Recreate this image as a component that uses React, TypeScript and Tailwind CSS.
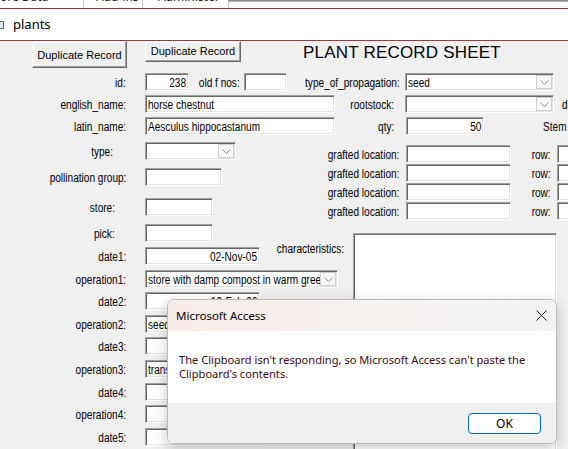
import React from 'react';

const SANS = "font-['Liberation_Sans',Arial,sans-serif]";
const UI = "font-['Noto_Sans','Open_Sans',sans-serif]";
const SUNKEN =
  'bg-white border border-t-[#a0a0a0] border-l-[#a0a0a0] border-b-white border-r-white shadow-[inset_1px_1px_0_#696969,inset_-1px_-1px_0_#e3e3e3]';
const RAISED =
  'bg-[#f0f0f0] border border-t-white border-l-white border-b-[#696969] border-r-[#696969] shadow-[inset_-1px_-1px_0_#a0a0a0,inset_1px_1px_0_#f8f8f8]';

// Access form text is Arial Narrow; squeeze Liberation Sans to the same width
const Narrow: React.FC<{ right?: boolean; children: React.ReactNode }> = ({ right, children }) => (
  <span
    className={`inline-block whitespace-nowrap text-[12px] leading-none text-black scale-x-[0.84] ${
      right ? 'origin-right' : 'origin-left'
    }`}
  >
    {children}
  </span>
);

const Chevron = () => (
  <svg width="9" height="5" viewBox="0 0 9 5">
    <polyline points="0.5,0.5 4.5,4.5 8.5,0.5" fill="none" stroke="#8c8c8c" strokeWidth="1" />
  </svg>
);

interface FieldProps {
  w: string;
  value?: string;
  right?: boolean;
  combo?: boolean;
  className?: string;
}

const Field: React.FC<FieldProps> = ({ w, value, right, combo, className = '' }) => (
  <div className={`${SUNKEN} ${w} h-[18px] shrink-0 flex items-center overflow-hidden ${className}`}>
    <div className={`flex-1 min-w-0 overflow-hidden whitespace-nowrap px-[2px] ${right ? 'text-right' : ''}`}>
      {value && <Narrow right={right}>{value}</Narrow>}
    </div>
    {combo && (
      <div className="w-[16px] h-[14px] mr-[1px] shrink-0 border border-[#cfcfcf] bg-[#fbfbfb] flex items-center justify-center">
        <Chevron />
      </div>
    )}
  </div>
);

const Label: React.FC<{ w: string; className?: string; children: React.ReactNode }> = ({
  w,
  className = '',
  children,
}) => (
  <div className={`${w} shrink-0 text-right whitespace-nowrap ${className}`}>
    <Narrow right>{children}</Narrow>
  </div>
);

// left column rows: label cell is 126px, field starts at x 145
const LEFT_ROWS = [
  { label: 'type:', pr: 'pr-[13px]', mt: 'mt-0', field: <Field w="w-[91px]" combo /> },
  { label: 'pollination group:', pr: '', mt: 'mt-[8px]', field: <Field w="w-[77px]" /> },
  { label: 'store:', pr: 'pr-[11px]', mt: 'mt-[12px]', field: <Field w="w-[68px]" /> },
  { label: 'pick:', pr: 'pr-[11px]', mt: 'mt-[8px]', field: <Field w="w-[68px]" /> },
  { label: 'date1:', pr: '', mt: 'mt-[5px]', field: <Field w="w-[115px]" value="02-Nov-05" right /> },
  {
    label: 'operation1:',
    pr: '',
    mt: 'mt-[5px]',
    field: <Field w="w-[193px]" value="store with damp compost in warm greenhouse" combo />,
  },
  { label: 'date2:', pr: '', mt: 'mt-[4px]', field: <Field w="w-[115px]" value="19-Feb-06" right /> },
  { label: 'operation2:', pr: '', mt: 'mt-[5px]', field: <Field w="w-[193px]" value="seed sown in pots" combo /> },
  { label: 'date3:', pr: '', mt: 'mt-[4px]', field: <Field w="w-[115px]" /> },
  { label: 'operation3:', pr: '', mt: 'mt-[5px]', field: <Field w="w-[193px]" value="transplanted" combo /> },
  { label: 'date4:', pr: '', mt: 'mt-[5px]', field: <Field w="w-[115px]" /> },
  { label: 'operation4:', pr: '', mt: 'mt-[4px]', field: <Field w="w-[193px]" combo /> },
  { label: 'date5:', pr: '', mt: 'mt-[5px]', field: <Field w="w-[115px]" /> },
];

const GRAFTED = ['mt-0', 'mt-[1px]', 'mt-[1px]', 'mt-[1px]'];

export default function App() {
  return (
    <div className={`relative w-[568px] h-[449px] overflow-hidden bg-[#f0f0f0] ${SANS}`}>
      {/* ribbon remnant */}
      <div className="relative h-[9px] bg-white flex overflow-hidden border-b border-[#a4373a]">
        <div className="absolute left-[228px] right-0 top-0 h-[2px] bg-gradient-to-b from-[#7a7a7a] to-[#c8c8c8]" />
        <div className={`w-[83px] -mt-[12px] text-[12px] text-[#222] ${UI}`}>ore Data</div>
        <div className="w-px h-[8px] bg-[#c8c8c8]" />
        <div className={`w-[58px] -mt-[12px] pl-[12px] text-[12px] text-[#222] ${UI}`}>Add-ins</div>
        <div className="w-px h-[8px] bg-[#c8c8c8]" />
        <div className={`w-[85px] -mt-[12px] pl-[15px] text-[12px] text-[#222] ${UI}`}>Administer</div>
        <div className="w-px h-[8px] bg-[#c8c8c8]" />
      </div>

      {/* object tab */}
      <div className="h-[32px] bg-white border-b border-[#a4373a] flex items-center">
        <div className="w-[4px] h-[8px] border border-l-0 border-[#4a6a9a] bg-[#dfe8f5] mt-[1px]" />
        <span className={`ml-[9px] text-[13px] text-black ${UI}`}>plants</span>
      </div>

      {/* form header */}
      <div className="flex items-start h-[27px]">
        <button className={`${RAISED} ml-[32px] w-[95px] h-[27px] text-[11px] text-black pt-[1px]`}>Duplicate Record</button>
        <button className={`${RAISED} ml-[18px] w-[96px] h-[21px] text-[11px] text-black`}>Duplicate Record</button>
        <div className="ml-[62px] mt-[3px] text-[17px] leading-none text-black tracking-[0.2px]">PLANT RECORD SHEET</div>
      </div>

      {/* id row */}
      <div className="mt-[5px] flex items-center h-[18px]">
        <Label w="w-[126px]">id:</Label>
        <Field w="w-[44px]" className="ml-[19px]" value="238" right />
        <Label w="w-[55px]" className="pr-[4px]">old f nos:</Label>
        <Field w="w-[43px]" />
        <Label w="w-[118px]" className="pr-[11px]">type_of_propagation:</Label>
        <Field w="w-[149px]" value="seed" combo />
      </div>

      {/* english row */}
      <div className="mt-[4px] flex items-center h-[18px]">
        <Label w="w-[126px]">english_name:</Label>
        <Field w="w-[190px]" className="ml-[19px]" value="horse chestnut" />
        <Label w="w-[70px]" className="pr-[11px]">rootstock:</Label>
        <Field w="w-[149px]" combo />
        <span className="ml-[8px]">
          <Narrow>d</Narrow>
        </span>
      </div>

      {/* latin row */}
      <div className="mt-[4px] flex items-center h-[18px]">
        <Label w="w-[126px]">latin_name:</Label>
        <Field w="w-[190px]" className="ml-[19px]" value="Aesculus hippocastanum" />
        <Label w="w-[71px]" className="pr-[12px]">qty:</Label>
        <Field w="w-[78px]" value="50" right />
        <span className="ml-[59px]">
          <Narrow>Stem</Narrow>
        </span>
      </div>

      {/* body */}
      <div className="flex">
        <div className="w-[262px] shrink-0 mt-[7px] flex flex-col">
          {LEFT_ROWS.map((r) => (
            <div key={r.label} className={`flex items-center h-[18px] ${r.mt}`}>
              <Label w="w-[126px]" className={r.pr}>
                {r.label}
              </Label>
              <div className="ml-[19px]">{r.field}</div>
            </div>
          ))}
        </div>

        <div className="flex-1 mt-[10px] flex flex-col">
          {GRAFTED.map((mt, i) => (
            <div key={i} className={`flex items-center h-[18px] ${mt}`}>
              <Label w="w-[137px]">grafted location:</Label>
              <Field w="w-[105px]" className="ml-[7px]" />
              <Label w="w-[46px]" className="pr-[6px]">row:</Label>
              <Field w="w-[30px]" />
            </div>
          ))}
          <div className="mt-[13px] flex items-start">
            <Label w="w-[82px]" className="pt-[3px]">characteristics:</Label>
            <div className={`${SUNKEN} ml-[9px] w-[204px] h-[230px]`} />
          </div>
        </div>
      </div>

      {/* message box */}
      <div
        className={`absolute left-[167px] top-[299px] w-[390px] h-[145px] rounded-[7px] border border-[#b9b9b9] shadow-[0_4px_14px_rgba(0,0,0,0.22)] overflow-hidden flex flex-col ${UI}`}
      >
        <div className="h-[31px] shrink-0 bg-gradient-to-r from-[#f8ece8] via-[#f5f1ef] to-[#f3f3f3] flex items-center justify-between pl-[8px] pr-[9px]">
          <span className="text-[11.5px] text-black">Microsoft Access</span>
          <svg width="11" height="11" viewBox="0 0 11 11">
            <path d="M0.5 0.5 L10.5 10.5 M10.5 0.5 L0.5 10.5" stroke="#1a1a1a" strokeWidth="1" fill="none" />
          </svg>
        </div>
        <div className="h-[72px] shrink-0 bg-white pl-[11px] pt-[22px] text-[11.1px] leading-[14px] text-[#3c0a10] whitespace-nowrap">
          The Clipboard isn't responding, so Microsoft Access can't paste the
          <br />
          Clipboard's contents.
        </div>
        <div className="flex-1 bg-[#f0f0f0] flex justify-end items-start pt-[10px] pr-[15px]">
          <button className="w-[73px] h-[21px] rounded-[4px] border border-[#0067c0] bg-white text-[12px] text-black leading-none">
            OK
          </button>
        </div>
      </div>
    </div>
  );
}
